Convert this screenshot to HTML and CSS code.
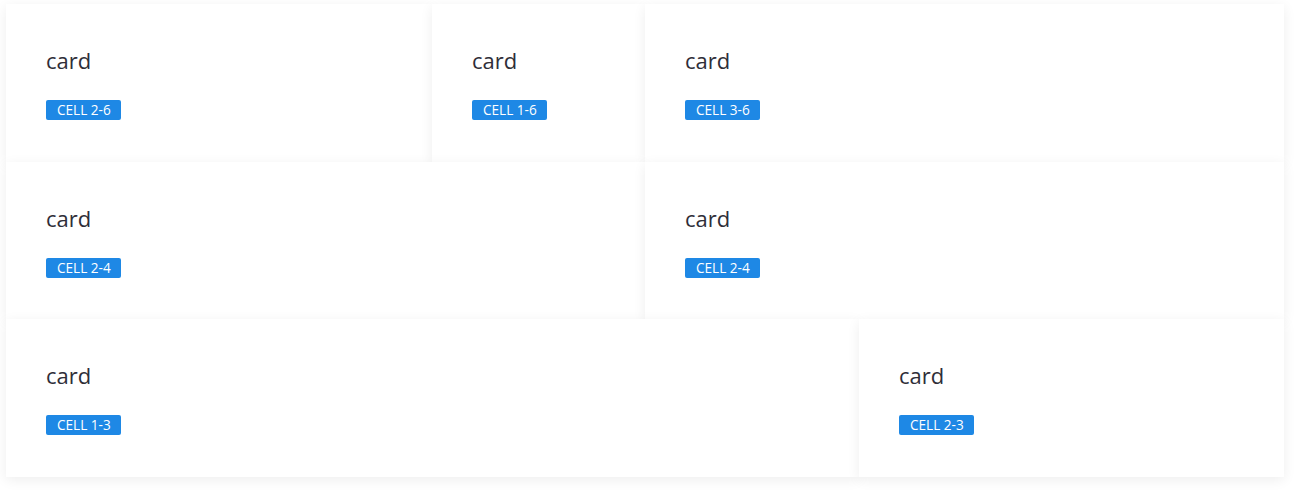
FILE: index.html
```html
<!DOCTYPE html>
<html lang="en">
<head>
<meta charset="utf-8">
<title>Cards</title>
<link rel="stylesheet" href="styles.css">
</head>
<body>
<div class="grid">
  <div class="row">
    <div class="card w2-6"><div class="title">card</div><span class="badge">Cell 2-6</span></div>
    <div class="card w1-6"><div class="title">card</div><span class="badge">Cell 1-6</span></div>
    <div class="card w3-6"><div class="title">card</div><span class="badge">Cell 3-6</span></div>
  </div>
  <div class="row">
    <div class="card w2-4"><div class="title">card</div><span class="badge">Cell 2-4</span></div>
    <div class="card w2-4"><div class="title">card</div><span class="badge">Cell 2-4</span></div>
  </div>
  <div class="row">
    <div class="card w2-3"><div class="title">card</div><span class="badge">Cell 1-3</span></div>
    <div class="card w1-3"><div class="title">card</div><span class="badge">Cell 2-3</span></div>
  </div>
</div>
</body>
</html>
```
FILE: styles.css
```css
html, body {
  margin: 0;
  padding: 0;
  background: #ffffff;
}
body {
  min-height: 491px;
  font-family: "Open Sans", "Noto Sans", "Liberation Sans", sans-serif;
}
.grid {
  width: 1278px;
  margin: 4px 0 0 6px;
  display: flex;
  flex-direction: column;
}
.row {
  display: flex;
}
.card {
  box-sizing: border-box;
  height: 157.5px;
  padding: 40px 40px 0 40px;
  background: #ffffff;
  box-shadow: 0 3px 12px rgba(0, 0, 0, 0.07);
}
.w1-6 { width: 213px; }
.w2-6 { width: 426px; }
.w3-6 { width: 639px; }
.w2-4 { width: 639px; }
.w1-3 { width: 425px; }
.w2-3 { width: 853px; }
.title {
  font-size: 22px;
  line-height: 33px;
  color: #2f2e38;
  margin-bottom: 21px;
}
.badge {
  display: inline-block;
  background: #1e88e5;
  color: #ffffff;
  font-size: 13.6px;
  line-height: 20px;
  height: 20px;
  padding: 0 10px 0 11px;
  border-radius: 2px;
  text-transform: uppercase;
}
```
